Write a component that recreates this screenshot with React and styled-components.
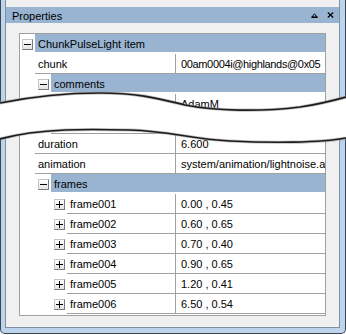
import React from "react";
import styled, { createGlobalStyle } from "styled-components";

const GlobalStyle = createGlobalStyle`
  html, body {
    margin: 0;
    padding: 0;
    background: #fff;
  }
  body {
    font-family: "Liberation Sans", Arial, sans-serif;
    font-size: 11px;
    color: #000;
  }
`;

const Page = styled.div`
  position: relative;
  width: 346px;
  height: 335px;
  overflow: hidden;
`;

const Frame = styled.div`
  box-sizing: border-box;
  width: 346px;
  height: 334px;
  display: flex;
  padding: 0 5px 5px 4px;
  background: #bcd4ec;
  border: 1px solid #3f4550;
  border-top: none;
  border-radius: 0 0 5px 5px;
`;

const Panel = styled.div`
  flex: 1;
  min-width: 0;
  display: flex;
  flex-direction: column;
  background: #f0f0f0;
  border: 1px solid #7f8fa4;
  border-top: none;
`;

const TitleBar = styled.div`
  display: flex;
  align-items: center;
  height: 16px;
  margin-top: 7px;
  padding: 0 5px 0 6px;
  background: #99b4d1;
`;

const TitleText = styled.span`
  line-height: 16px;
  padding-top: 2px;
`;

const TitleButtons = styled.div`
  display: flex;
  align-items: center;
  gap: 9px;
  margin-left: auto;
`;

const Grid = styled.div`
  display: flex;
  flex-direction: column;
  min-width: 0;
  height: 281px;
  margin: 10px 13px 0 13px;
  background: #fff;
  border: 1px solid #a0a0a0;
  overflow: hidden;
`;

const Row = styled.div`
  display: flex;
  min-width: 0;
  height: 20px;
  flex-shrink: 0;
`;

const Gutter = styled.div`
  width: ${(p) => p.$indent}px;
  flex-shrink: 0;
  background: #fff;
`;

const Toggle = styled.span`
  position: relative;
  display: block;
  box-sizing: border-box;
  width: 11px;
  height: 11px;
  margin: 5px 0 0 ${(p) => p.$indent - 13}px;
  background: linear-gradient(#ffffff, #e4e4e4);
  border: 1px solid;
  border-color: #c4c4c4 #7a7a7a #7a7a7a #c4c4c4;

  &::before {
    content: "";
    position: absolute;
    left: 1px;
    top: 4px;
    width: 7px;
    height: 1px;
    background: #000;
  }

  &::after {
    content: "";
    display: ${(p) => (p.$open ? "none" : "block")};
    position: absolute;
    left: 4px;
    top: 1px;
    width: 1px;
    height: 7px;
    background: #000;
  }
`;

const CategoryBar = styled.div`
  flex: 1;
  min-width: 0;
  height: 19px;
  line-height: 19px;
  padding: 1px 0 0 3px;
  box-sizing: border-box;
  background: #99b4d1;
  border-bottom: 1px solid #fff;
  white-space: nowrap;
  overflow: hidden;
`;

const Label = styled.div`
  width: ${(p) => 155 - p.$indent}px;
  flex-shrink: 0;
  box-sizing: border-box;
  padding: 1px 0 0 3px;
  line-height: 18px;
  border-bottom: 1px solid #a0a0a0;
  white-space: nowrap;
  overflow: hidden;
`;

const Value = styled.div`
  flex: 1;
  min-width: 0;
  box-sizing: border-box;
  padding: 1px 0 0 5px;
  line-height: 18px;
  letter-spacing: ${(p) => (p.$tight ? "-0.35px" : "normal")};
  border-left: 1px solid #a0a0a0;
  border-bottom: 1px solid #a0a0a0;
  white-space: nowrap;
  overflow: hidden;
`;

const Tear = styled.svg`
  position: absolute;
  left: 0;
  top: 0;
  pointer-events: none;
`;

const PinIcon = () => (
  <svg width="7" height="5" viewBox="0 0 7 5">
    <path d="M3.5 0.8 L6.2 4.2 L0.8 4.2 Z" fill="none" stroke="#000" strokeWidth="1" />
    <rect x="0.5" y="3.6" width="6" height="1.4" fill="#000" />
  </svg>
);

const CloseIcon = () => (
  <svg width="7" height="6" viewBox="0 0 7 6">
    <path d="M0.8 0.5 L6.2 5.5 M6.2 0.5 L0.8 5.5" stroke="#000" strokeWidth="1.2" />
  </svg>
);

const rows = [
  { type: "cat", indent: 15, label: "ChunkPulseLight item" },
  { type: "prop", indent: 15, label: "chunk", value: "00am0004i@highlands@0x05", tight: true },
  { type: "cat", indent: 31, label: "comments" },
  { type: "prop", indent: 31, label: "author", value: "AdamM" },
  { type: "prop", indent: 31, label: "notes", value: "" },
  { type: "prop", indent: 15, label: "duration", value: "6.600" },
  { type: "prop", indent: 15, label: "animation", value: "system/animation/lightnoise.a" },
  { type: "cat", indent: 31, label: "frames" },
  { type: "prop", indent: 47, label: "frame001", value: "0.00 , 0.45", closed: true },
  { type: "prop", indent: 47, label: "frame002", value: "0.60 , 0.65", closed: true },
  { type: "prop", indent: 47, label: "frame003", value: "0.70 , 0.40", closed: true },
  { type: "prop", indent: 47, label: "frame004", value: "0.90 , 0.65", closed: true },
  { type: "prop", indent: 47, label: "frame005", value: "1.20 , 0.41", closed: true },
  { type: "prop", indent: 47, label: "frame006", value: "6.50 , 0.54", closed: true },
];

const GridRow = ({ row }) => {
  if (row.type === "cat") {
    return (
      <Row>
        <Gutter $indent={row.indent}>
          <Toggle $indent={row.indent} $open />
        </Gutter>
        <CategoryBar>{row.label}</CategoryBar>
      </Row>
    );
  }
  return (
    <Row>
      <Gutter $indent={row.indent}>
        {row.closed && <Toggle $indent={row.indent} />}
      </Gutter>
      <Label $indent={row.indent}>{row.label}</Label>
      <Value $tight={row.tight}>{row.value}</Value>
    </Row>
  );
};

const topEdge =
  "M0 103 C 25 98, 60 93, 100 93 C 140 93, 160 99, 185 105 C 215 111, 260 112, 300 107 C 320 104, 335 100, 346 97";
const bottomEdge =
  "M346 138 C 320 143, 270 143, 230 141 C 190 139, 170 131, 130 130 C 90 129, 40 128, 0 139";

const TornEdge = () => (
  <Tear width="346" height="335" viewBox="0 0 346 335">
    <path
      d={`${topEdge} L346 138 C 320 143, 270 143, 230 141 C 190 139, 170 131, 130 130 C 90 129, 40 128, 0 139 Z`}
      fill="#fff"
    />
    <path d={topEdge} fill="none" stroke="#9a9a9a" strokeWidth="3.2" opacity="0.6" />
    <path d={bottomEdge} fill="none" stroke="#9a9a9a" strokeWidth="3.2" opacity="0.6" />
    <path d={topEdge} fill="none" stroke="#1c1c1c" strokeWidth="1.7" />
    <path d={bottomEdge} fill="none" stroke="#1c1c1c" strokeWidth="1.7" />
  </Tear>
);

export default function App() {
  return (
    <Page>
      <GlobalStyle />
      <Frame>
        <Panel>
          <TitleBar>
            <TitleText>Properties</TitleText>
            <TitleButtons>
              <PinIcon />
              <CloseIcon />
            </TitleButtons>
          </TitleBar>
          <Grid>
            {rows.map((row) => (
              <GridRow key={row.label} row={row} />
            ))}
          </Grid>
        </Panel>
      </Frame>
      <TornEdge />
    </Page>
  );
}
